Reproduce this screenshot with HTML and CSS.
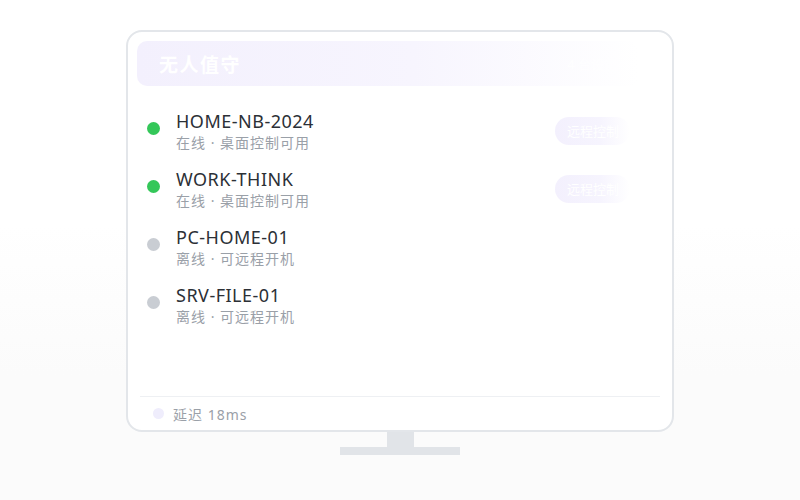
FILE: index.html
```html
<!DOCTYPE html>
<html lang="zh">
<head>
<meta charset="utf-8">
<link rel="stylesheet" href="styles.css">
</head>
<body>
<div class="scene">
  <div class="monitor">
    <div class="header">
      <span class="title">无人值守</span>
      <span class="count">4 台设备</span>
    </div>
    <div class="list">
      <div class="row">
        <span class="dot on"></span>
        <div class="info">
          <div class="name">HOME-NB-2024</div>
          <div class="sub">在线 · 桌面控制可用</div>
        </div>
        <span class="btn">远程控制</span>
      </div>
      <div class="row">
        <span class="dot on"></span>
        <div class="info">
          <div class="name">WORK-THINK</div>
          <div class="sub">在线 · 桌面控制可用</div>
        </div>
        <span class="btn">远程控制</span>
      </div>
      <div class="row">
        <span class="dot off"></span>
        <div class="info">
          <div class="name">PC-HOME-01</div>
          <div class="sub">离线 · 可远程开机</div>
        </div>
      </div>
      <div class="row">
        <span class="dot off"></span>
        <div class="info">
          <div class="name">SRV-FILE-01</div>
          <div class="sub">离线 · 可远程开机</div>
        </div>
      </div>
    </div>
    <div class="footer">
      <span class="fdot"></span>
      <span class="latency">延迟 18ms</span>
    </div>
  </div>
  <div class="neck"></div>
  <div class="base"></div>
</div>
</body>
</html>
```
FILE: styles.css
```css
html, body {
  margin: 0;
  padding: 0;
}
body {
  width: 800px;
  height: 500px;
  overflow: hidden;
  background: linear-gradient(180deg, #ffffff 0%, #ffffff 45%, #fbfbfb 75%, #fbfbfb 100%);
  font-family: "Noto Sans", "Noto Sans CJK SC", sans-serif;
}
.scene {
  display: flex;
  flex-direction: column;
  align-items: center;
  padding-top: 30px;
}
.monitor {
  box-sizing: border-box;
  width: 548px;
  height: 402px;
  border: 2px solid #e3e6ea;
  border-radius: 16px;
  background: #ffffff;
  padding: 9px 9px 0 9px;
  display: flex;
  flex-direction: column;
}
.header {
  height: 45px;
  border-radius: 10px;
  background: linear-gradient(90deg, #f3f0fd 0%, #f7f5fe 55%, rgba(255,255,255,0) 100%);
  display: flex;
  align-items: center;
  justify-content: space-between;
  padding: 0 22px;
  margin-right: 24px;
}
.title {
  color: #ffffff;
  font-size: 19px;
  font-weight: 700;
  letter-spacing: 1.5px;
}
.count {
  color: rgba(255,255,255,0.9);
  font-size: 13px;
}
.list {
  flex: 1;
  display: flex;
  flex-direction: column;
  padding-top: 25px;
}
.row {
  height: 58px;
  display: flex;
  align-items: flex-start;
  padding-left: 10px;
}
.dot {
  width: 13px;
  height: 13px;
  border-radius: 50%;
  margin-top: 11px;
  margin-right: 16px;
  flex: none;
}
.dot.on { background: #34c759; }
.dot.off { background: #c9cdd3; }
.info {
  flex: 1;
}
.name {
  font-size: 18px;
  line-height: 21px;
  color: #2c3036;
  letter-spacing: 0.5px;
}
.sub {
  font-size: 14px;
  line-height: 21px;
  color: #9aa0a8;
  letter-spacing: 1px;
}
.btn {
  margin-top: 6px;
  margin-right: 33px;
  width: 75px;
  height: 28px;
  border-radius: 14px;
  background: linear-gradient(90deg, #f3f0fd 0%, #f6f4fe 60%, rgba(255,255,255,0) 100%);
  color: #ffffff;
  font-size: 13px;
  line-height: 28px;
  padding-left: 12px;
  box-sizing: border-box;
  white-space: nowrap;
  overflow: hidden;
}
.footer {
  height: 33px;
  border-top: 1px solid #eef0f3;
  margin: 0 3px;
  display: flex;
  align-items: center;
  padding-left: 13px;
}
.fdot {
  width: 11px;
  height: 11px;
  border-radius: 50%;
  background: #efedfc;
  margin-right: 9px;
}
.latency {
  font-size: 14px;
  color: #9aa0a8;
  letter-spacing: 1px;
}
.neck {
  width: 27px;
  height: 15px;
  background: #e1e4e8;
}
.base {
  width: 120px;
  height: 8px;
  background: #e1e4e8;
}
```
